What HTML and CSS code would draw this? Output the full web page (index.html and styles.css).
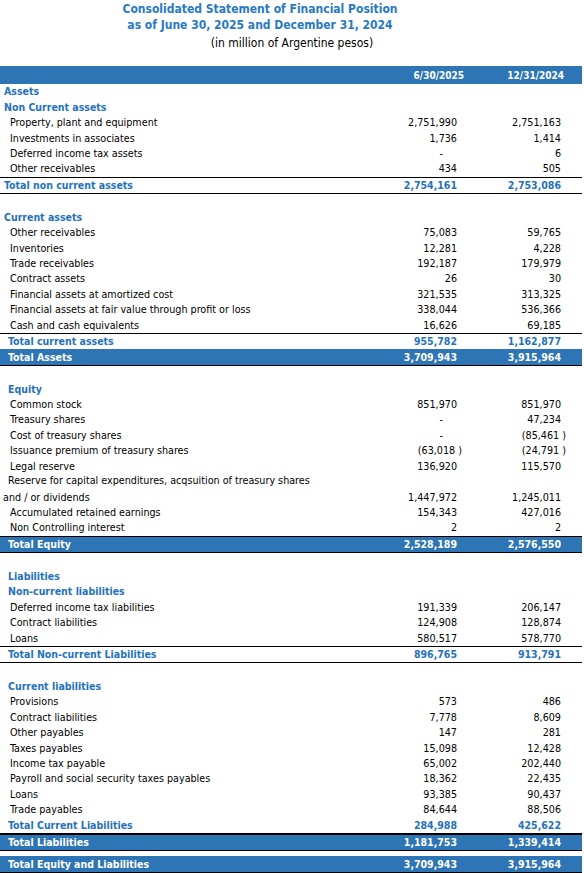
FILE: index.html
```html
<!DOCTYPE html>
<html>
<head>
<meta charset="utf-8">
<link rel="stylesheet" href="styles.css">
</head>
<body>
<div class="titles">
  <div class="t1">Consolidated Statement of Financial Position</div>
  <div class="t1">as of June 30, 2025 and December 31, 2024</div>
  <div class="t2">(in million of Argentine pesos)</div>
</div>
<table class="fs">
  <colgroup><col class="c-lab"><col class="c-v1"><col class="c-v2"></colgroup>
  <tr class="band head"><td></td><td class="v1">6/30/2025</td><td class="v2">12/31/2024</td></tr>
  <tr class="sec"><td class="l0">Assets</td><td></td><td></td></tr>
  <tr class="sec"><td class="l0">Non Current assets</td><td></td><td></td></tr>
  <tr><td class="l1">Property, plant and equipment</td><td class="v1">2,751,990</td><td class="v2">2,751,163</td></tr>
  <tr><td class="l1">Investments in associates</td><td class="v1">1,736</td><td class="v2">1,414</td></tr>
  <tr><td class="l1">Deferred income tax assets</td><td class="v1"><span class="dash">-</span></td><td class="v2">6</td></tr>
  <tr><td class="l1">Other receivables</td><td class="v1">434</td><td class="v2">505</td></tr>
  <tr class="tot lines"><td class="l0">Total non current assets</td><td class="v1">2,754,161</td><td class="v2">2,753,086</td></tr>
  <tr class="blank"><td></td><td></td><td></td></tr>
  <tr class="sec"><td class="l0">Current assets</td><td></td><td></td></tr>
  <tr><td class="l1">Other receivables</td><td class="v1">75,083</td><td class="v2">59,765</td></tr>
  <tr><td class="l1">Inventories</td><td class="v1">12,281</td><td class="v2">4,228</td></tr>
  <tr><td class="l1">Trade receivables</td><td class="v1">192,187</td><td class="v2">179,979</td></tr>
  <tr><td class="l1">Contract assets</td><td class="v1">26</td><td class="v2">30</td></tr>
  <tr><td class="l1">Financial assets at amortized cost</td><td class="v1">321,535</td><td class="v2">313,325</td></tr>
  <tr><td class="l1">Financial assets at fair value through profit or loss</td><td class="v1">338,044</td><td class="v2">536,366</td></tr>
  <tr><td class="l1">Cash and cash equivalents</td><td class="v1">16,626</td><td class="v2">69,185</td></tr>
  <tr class="tot top"><td class="l2">Total current assets</td><td class="v1">955,782</td><td class="v2">1,162,877</td></tr>
  <tr class="band totband"><td class="l2">Total Assets</td><td class="v1">3,709,943</td><td class="v2">3,915,964</td></tr>
  <tr class="blank"><td></td><td></td><td></td></tr>
  <tr class="sec"><td class="l2">Equity</td><td></td><td></td></tr>
  <tr><td class="l1">Common stock</td><td class="v1">851,970</td><td class="v2">851,970</td></tr>
  <tr><td class="l1">Treasury shares</td><td class="v1"><span class="dash">-</span></td><td class="v2">47,234</td></tr>
  <tr><td class="l1">Cost of treasury shares</td><td class="v1"><span class="dash">-</span></td><td class="v2"><span class="neg">(85,461 )</span></td></tr>
  <tr><td class="l1">Issuance premium of treasury shares</td><td class="v1"><span class="neg">(63,018 )</span></td><td class="v2"><span class="neg">(24,791 )</span></td></tr>
  <tr><td class="l1">Legal reserve</td><td class="v1">136,920</td><td class="v2">115,570</td></tr>
  <tr class="wrap1"><td class="lr">Reserve for capital expenditures, acqsuition of treasury shares</td><td></td><td></td></tr>
  <tr class="wrap2"><td class="lw">and / or dividends</td><td class="v1">1,447,972</td><td class="v2">1,245,011</td></tr>
  <tr><td class="l1">Accumulated retained earnings</td><td class="v1">154,343</td><td class="v2">427,016</td></tr>
  <tr><td class="l1">Non Controlling interest</td><td class="v1">2</td><td class="v2">2</td></tr>
  <tr class="band totband both"><td class="l2">Total Equity</td><td class="v1">2,528,189</td><td class="v2">2,576,550</td></tr>
  <tr class="blank"><td></td><td></td><td></td></tr>
  <tr class="sec"><td class="l2">Liabilities</td><td></td><td></td></tr>
  <tr class="sec"><td class="l2">Non-current liabilities</td><td></td><td></td></tr>
  <tr><td class="l1">Deferred income tax liabilities</td><td class="v1">191,339</td><td class="v2">206,147</td></tr>
  <tr><td class="l1">Contract liabilities</td><td class="v1">124,908</td><td class="v2">128,874</td></tr>
  <tr><td class="l1">Loans</td><td class="v1">580,517</td><td class="v2">578,770</td></tr>
  <tr class="tot lines"><td class="l2">Total Non-current Liabilities</td><td class="v1">896,765</td><td class="v2">913,791</td></tr>
  <tr class="blank"><td></td><td></td><td></td></tr>
  <tr class="sec"><td class="l2">Current liabilities</td><td></td><td></td></tr>
  <tr><td class="l1">Provisions</td><td class="v1">573</td><td class="v2">486</td></tr>
  <tr><td class="l1">Contract liabilities</td><td class="v1">7,778</td><td class="v2">8,609</td></tr>
  <tr><td class="l1">Other payables</td><td class="v1">147</td><td class="v2">281</td></tr>
  <tr><td class="l1">Taxes payables</td><td class="v1">15,098</td><td class="v2">12,428</td></tr>
  <tr><td class="l1">Income tax payable</td><td class="v1">65,002</td><td class="v2">202,440</td></tr>
  <tr><td class="l1">Payroll and social security taxes payables</td><td class="v1">18,362</td><td class="v2">22,435</td></tr>
  <tr><td class="l1">Loans</td><td class="v1">93,385</td><td class="v2">90,437</td></tr>
  <tr><td class="l1">Trade payables</td><td class="v1">84,644</td><td class="v2">88,506</td></tr>
  <tr class="tot under"><td class="l2">Total Current Liabilities</td><td class="v1">284,988</td><td class="v2">425,622</td></tr>
  <tr class="band totband"><td class="l2">Total Liabilities</td><td class="v1">1,181,753</td><td class="v2">1,339,414</td></tr>
  <tr class="gap"><td></td><td></td><td></td></tr>
  <tr class="band totband"><td class="l2">Total Equity and Liabilities</td><td class="v1">3,709,943</td><td class="v2">3,915,964</td></tr>
</table>
</body>
</html>
```

FILE: styles.css
```css
html, body {
  margin: 0;
  padding: 0;
  background: #ffffff;
}
body {
  width: 584px;
  font-family: "DejaVu Sans", Verdana, sans-serif;
  font-stretch: condensed;
  color: #000000;
}
.titles {
  text-align: center;
  box-sizing: border-box;
  height: 66px;
  padding-top: 1px;
}
.t1 {
  font-size: 12px;
  font-weight: bold;
  color: #2779c4;
  line-height: 16px;
  padding-right: 64px;
}
.t2 {
  font-size: 12px;
  line-height: 20px;
  color: #000;
}
.fs {
  border-collapse: collapse;
  table-layout: fixed;
  width: 582px;
  font-size: 10.7px;
}
.c-lab { width: 372px; }
.c-v1 { width: 93px; }
.c-v2 { width: 117px; }
.fs td {
  padding: 0;
  height: 15.45px;
  line-height: 13px;
  vertical-align: middle;
  white-space: nowrap;
  overflow: visible;
}
.fs td.v1 { text-align: right; padding-right: 8px; }
.fs td.v2 { text-align: right; padding-right: 21px; }
.head td {
  height: 18px;
  font-weight: bold;
  font-size: 10px;
  color: #ffffff;
}
.head td.v1 { padding-right: 1px; }
.head td.v2 { padding-right: 18px; }
.band td { background: #2e75b6; color: #ffffff; }
.sec td, .tot td { color: #2472bd; font-weight: bold; font-size: 10.5px; }
.totband td { font-weight: bold; font-size: 10.5px; }
.l0 { padding-left: 4px !important; }
.l1 { padding-left: 10px !important; }
.l2 { padding-left: 8px !important; }
.lr { padding-left: 8px !important; vertical-align: top !important; }
.lw { padding-left: 3px !important; }
.lines td { border-top: 1px solid #000; border-bottom: 1px solid #000; }
.top td { border-top: 1px solid #000; }
.under td { border-bottom: 2px solid #000; }
.totband td { border-bottom: 1px solid #000; }
.both td { border-top: 1px solid #000; }
.gap td { height: 5px; }
.dash { display: inline-block; margin-right: 14px; }
.neg { margin-right: -5px; }
```
